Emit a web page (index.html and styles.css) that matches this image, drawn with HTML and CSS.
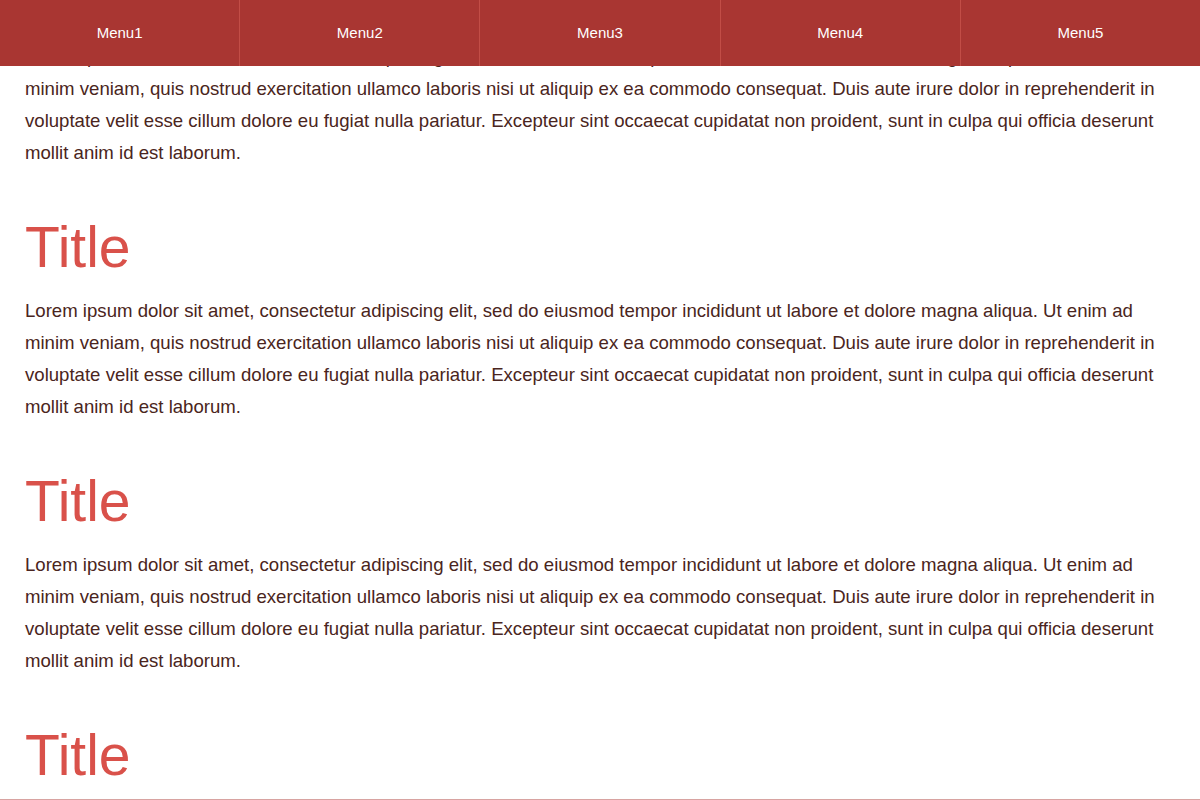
FILE: index.html
```html
<!DOCTYPE html>
<html lang="en">
<head>
<meta charset="utf-8">
<title>Menu page</title>
<link rel="stylesheet" href="styles.css">
</head>
<body>
<nav class="topnav">
  <a class="topnav-item" href="#">Menu1</a>
  <a class="topnav-item" href="#">Menu2</a>
  <a class="topnav-item" href="#">Menu3</a>
  <a class="topnav-item" href="#">Menu4</a>
  <a class="topnav-item" href="#">Menu5</a>
</nav>
<main class="content">
  <section class="section first">
    <p class="text">Lorem ipsum dolor sit amet, consectetur adipiscing elit, sed do eiusmod tempor incididunt ut labore et dolore magna aliqua. Ut enim ad minim veniam, quis nostrud exercitation ullamco laboris nisi ut aliquip ex ea commodo consequat. Duis aute irure dolor in reprehenderit in voluptate velit esse cillum dolore eu fugiat nulla pariatur. Excepteur sint occaecat cupidatat non proident, sunt in culpa qui officia deserunt mollit anim id est laborum.</p>
  </section>
  <section class="section">
    <h1 class="title">Title</h1>
    <p class="text">Lorem ipsum dolor sit amet, consectetur adipiscing elit, sed do eiusmod tempor incididunt ut labore et dolore magna aliqua. Ut enim ad minim veniam, quis nostrud exercitation ullamco laboris nisi ut aliquip ex ea commodo consequat. Duis aute irure dolor in reprehenderit in voluptate velit esse cillum dolore eu fugiat nulla pariatur. Excepteur sint occaecat cupidatat non proident, sunt in culpa qui officia deserunt mollit anim id est laborum.</p>
  </section>
  <section class="section">
    <h1 class="title">Title</h1>
    <p class="text">Lorem ipsum dolor sit amet, consectetur adipiscing elit, sed do eiusmod tempor incididunt ut labore et dolore magna aliqua. Ut enim ad minim veniam, quis nostrud exercitation ullamco laboris nisi ut aliquip ex ea commodo consequat. Duis aute irure dolor in reprehenderit in voluptate velit esse cillum dolore eu fugiat nulla pariatur. Excepteur sint occaecat cupidatat non proident, sunt in culpa qui officia deserunt mollit anim id est laborum.</p>
  </section>
  <section class="section">
    <h1 class="title">Title</h1>
    <p class="text">Lorem ipsum dolor sit amet, consectetur adipiscing elit, sed do eiusmod tempor incididunt ut labore et dolore magna aliqua. Ut enim ad minim veniam, quis nostrud exercitation ullamco laboris nisi ut aliquip ex ea commodo consequat. Duis aute irure dolor in reprehenderit in voluptate velit esse cillum dolore eu fugiat nulla pariatur. Excepteur sint occaecat cupidatat non proident, sunt in culpa qui officia deserunt mollit anim id est laborum.</p>
  </section>
</main>
<div class="bottom-line"></div>
</body>
</html>
```
FILE: styles.css
```css
html, body {
  margin: 0;
  padding: 0;
  background: #ffffff;
}
body {
  font-family: "Liberation Sans", Arial, sans-serif;
  color: #4a2520;
}
.topnav {
  position: fixed;
  top: 0;
  left: 0;
  right: 0;
  height: 66px;
  display: flex;
  background: #a93632;
  z-index: 10;
}
.topnav-item {
  flex: 1 1 0;
  display: flex;
  align-items: center;
  justify-content: center;
  padding-bottom: 1px;
  box-sizing: border-box;
  color: #ffffff;
  text-decoration: none;
  font-size: 15px;
  border-right: 1px solid #c24d46;
}
.topnav-item:last-child {
  border-right: none;
}
.content {
  padding: 41px 25px 0 25px;
}
.section {
  margin: 0;
}
.title {
  margin: 46px 0 16px;
  font-size: 57px;
  font-weight: normal;
  line-height: 64px;
  color: #d9514a;
}
.text {
  margin: 0;
  font-size: 18.6px;
  line-height: 32px;
}
.bottom-line {
  position: fixed;
  left: 0;
  right: 0;
  bottom: 0;
  height: 1px;
  background: #d8a3a1;
}
```
